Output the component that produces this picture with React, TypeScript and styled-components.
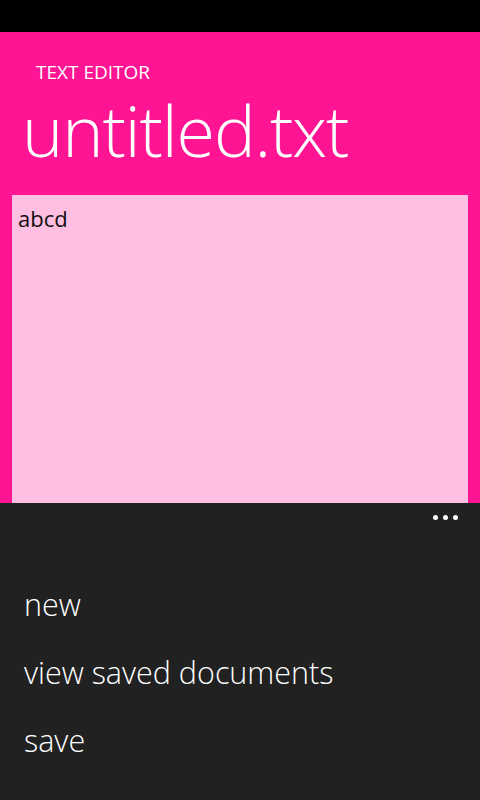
import React from "react";
import styled, { createGlobalStyle } from "styled-components";

const Global = createGlobalStyle`
  html, body { margin: 0; padding: 0; background: #000; }
  body { font-family: "Open Sans", "Noto Sans", sans-serif; }
`;

const Screen = styled.div`
  width: 480px;
  height: 800px;
  display: flex;
  flex-direction: column;
  overflow: hidden;
`;

const StatusBar = styled.div`
  height: 32px;
  background: #000;
  flex: none;
`;

const Page = styled.div`
  background: #ff1493;
  height: 471px;
  flex: none;
  display: flex;
  flex-direction: column;
  padding: 0 12px;
`;

const AppName = styled.div`
  color: #fff;
  font-size: 19px;
  font-weight: 400;
  line-height: 20px;
  margin: 30px 0 0 24px;
`;

const Title = styled.div`
  color: #fff;
  font-size: 70px;
  font-weight: 300;
  line-height: 96px;
  margin: 0 0 0 10px;
  letter-spacing: -1.1px;
`;

const Editor = styled.div`
  margin-top: 17px;
  flex: 1;
  background: #ffbfe3;
  color: #111;
  font-size: 22px;
  line-height: 30px;
  padding: 8px 6px;
`;

const AppBar = styled.div`
  flex: 1;
  background: #212121;
  display: flex;
  flex-direction: column;
`;

const DotsRow = styled.div`
  display: flex;
  justify-content: flex-end;
  gap: 5px;
  padding: 12px 22px 0 0;
`;

const Dot = styled.span`
  width: 5px;
  height: 5px;
  border-radius: 50%;
  background: #fff;
`;

const Menu = styled.div`
  display: flex;
  flex-direction: column;
  gap: 27px;
  padding: 64px 0 0 24px;
`;

const MenuItem = styled.div`
  color: #fff;
  font-size: 30.5px;
  font-weight: 300;
  line-height: 41px;
`;

export default function App() {
  return (
    <>
      <Global />
      <Screen>
        <StatusBar />
        <Page>
          <AppName>TEXT EDITOR</AppName>
          <Title>untitled.txt</Title>
          <Editor>abcd</Editor>
        </Page>
        <AppBar>
          <DotsRow>
            <Dot />
            <Dot />
            <Dot />
          </DotsRow>
          <Menu>
            <MenuItem>new</MenuItem>
            <MenuItem>view saved documents</MenuItem>
            <MenuItem>save</MenuItem>
          </Menu>
        </AppBar>
      </Screen>
    </>
  );
}
